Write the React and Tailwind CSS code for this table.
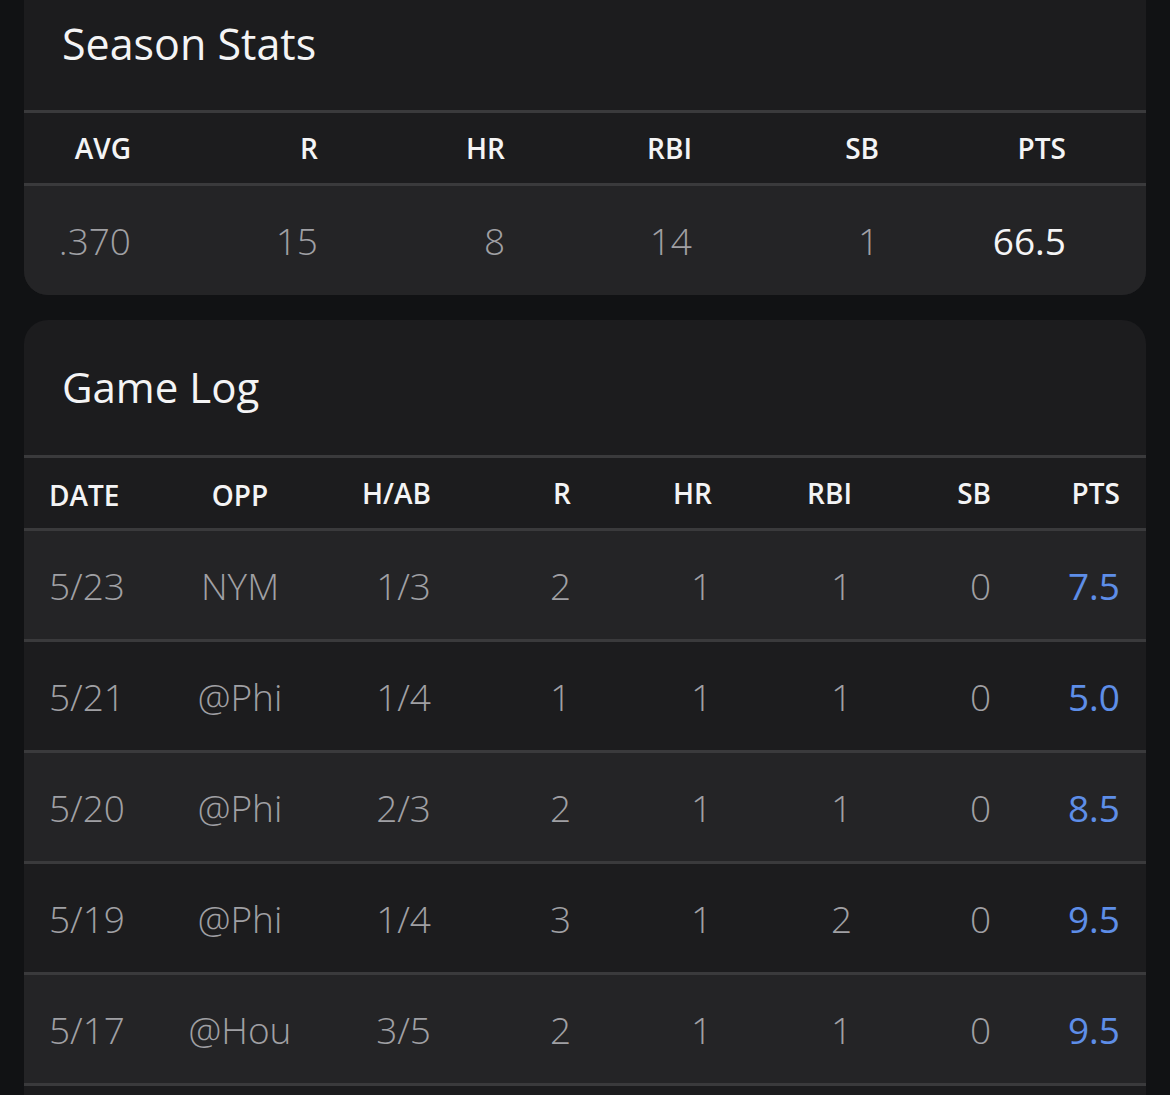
import React from "react";

const season = [
  { h: "AVG", v: ".370" },
  { h: "R", v: "15" },
  { h: "HR", v: "8" },
  { h: "RBI", v: "14" },
  { h: "SB", v: "1" },
  { h: "PTS", v: "66.5", strong: true },
];

const games = [
  ["5/23", "NYM", "1/3", "2", "1", "1", "0", "7.5"],
  ["5/21", "@Phi", "1/4", "1", "1", "1", "0", "5.0"],
  ["5/20", "@Phi", "2/3", "2", "1", "1", "0", "8.5"],
  ["5/19", "@Phi", "1/4", "3", "1", "2", "0", "9.5"],
  ["5/17", "@Hou", "3/5", "2", "1", "1", "0", "9.5"],
];

const gl = "grid grid-cols-[121px_140px_121px_140px_141px_140px_139px_129px] pl-[25px] pr-[26px]";

export default function App() {
  return (
    <div
      className="w-[1170px] h-[1095px] overflow-hidden bg-[#111214] px-[24px]"
      style={{ fontFamily: '"Open Sans", "Liberation Sans", sans-serif' }}
    >
      {/* Season Stats */}
      <div className="bg-[#1c1c1e] rounded-b-[24px] overflow-hidden">
        <div className="h-[110px] pt-[22px] pl-[38px] text-[43px] leading-none text-[#f4f4f5]">
          Season Stats
        </div>
        <div className="h-[3px] bg-[#3a3a3c]" />
        <div className="grid grid-cols-6 h-[70px] items-center">
          {season.map((c) => (
            <div key={c.h} className="pr-[80px] text-right text-[28px] font-semibold text-[#f4f4f5] leading-none">
              {c.h}
            </div>
          ))}
        </div>
        <div className="h-[3px] bg-[#3a3a3c]" />
        <div className="grid grid-cols-6 h-[109px] items-center bg-[#242426]">
          {season.map((c) => (
            <div
              key={c.h}
              className={
                c.strong
                  ? "pr-[80px] text-right text-[37px] font-medium text-[#f4f4f5] leading-none"
                  : "pr-[80px] text-right text-[37px] font-[350] text-[#a0a0a4] leading-none"
              }
            >
              {c.v}
            </div>
          ))}
        </div>
      </div>

      {/* Game Log */}
      <div className="mt-[25px] bg-[#1c1c1e] rounded-t-[24px] overflow-hidden">
        <div className="h-[135px] pt-[46px] pl-[38px] text-[42px] leading-none text-[#f4f4f5]">
          Game Log
        </div>
        <div className="h-[3px] bg-[#3a3a3c]" />
        <div className={gl + " h-[70px] items-center text-[28px] font-semibold text-[#f4f4f5] leading-none"}>
          <div className="text-left pt-[4px]">DATE</div>
          <div className="text-center pt-[4px]">OPP</div>
          <div className="text-right">H/AB</div>
          <div className="text-right">R</div>
          <div className="text-right">HR</div>
          <div className="text-right">RBI</div>
          <div className="text-right">SB</div>
          <div className="text-right">PTS</div>
        </div>
        {games.map((g, i) => (
          <div key={i}>
            <div className="h-[3px] bg-[#3a3a3c]" />
            <div
              className={
                gl +
                " h-[108px] items-center text-[37px] font-[350] text-[#a0a0a4] leading-none " +
                (i % 2 === 0 ? "bg-[#242426]" : "bg-[#1c1c1e]")
              }
            >
              <div className="text-left">{g[0]}</div>
              <div className="text-center">{g[1]}</div>
              <div className="text-right">{g[2]}</div>
              <div className="text-right">{g[3]}</div>
              <div className="text-right">{g[4]}</div>
              <div className="text-right">{g[5]}</div>
              <div className="text-right">{g[6]}</div>
              <div className="text-right font-medium text-[#5e8ee8]">{g[7]}</div>
            </div>
          </div>
        ))}
        <div className="h-[3px] bg-[#3a3a3c]" />
        <div className="h-[108px] bg-[#1c1c1e]" />
      </div>
    </div>
  );
}
